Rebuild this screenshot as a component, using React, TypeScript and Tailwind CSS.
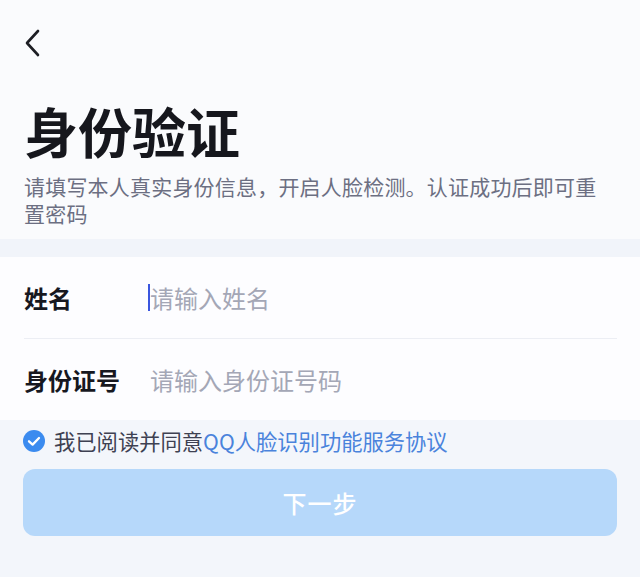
import React from "react";

const font = { fontFamily: '"Noto Sans CJK SC", "Noto Sans", sans-serif' };

const Field = ({ label, placeholder, focused }: { label: string; placeholder: string; focused?: boolean }) => (
  <div className="h-[81px] flex items-center">
    <span className="w-[126px] shrink-0 text-[24px] font-semibold text-[#17181f] leading-none">{label}</span>
    <div className="flex items-center">
      {focused && <span className="w-[2px] h-[27px] bg-[#3a56df] -ml-[2px]"></span>}
      <span className="text-[24px] text-[#a4a7b6] leading-none">{placeholder}</span>
    </div>
  </div>
);

export default function App() {
  return (
    <div className="w-[640px] h-[577px] overflow-hidden bg-[#f3f6fb]" style={font}>
      {/* top area */}
      <div className="bg-[#fafbfd]">
        <header className="h-[86px] flex items-center px-[22px]">
          <svg width="22" height="30" viewBox="0 0 22 30" fill="none">
            <path d="M16 3 L5 15 L16 27" stroke="#1d1e24" strokeWidth="2.6" strokeLinecap="round" strokeLinejoin="round" />
          </svg>
        </header>
        <div className="px-[24px] pt-[18px] pb-[12px]">
          <h1 className="text-[54px] leading-[54px] font-bold text-[#16171d]">身份验证</h1>
          <p className="mt-[15px] text-[21px] leading-[27px] text-[#6c6f82] tracking-[0.2px]">
            请填写本人真实身份信息，开启人脸检测。认证成功后即可重置密码
          </p>
        </div>
      </div>

      <div className="h-[18px] bg-[#f1f4fa]"></div>

      {/* form card */}
      <div className="bg-[#fdfdff] pl-[24px] pr-[23px]">
        <Field label="姓名" placeholder="请输入姓名" focused />
        <div className="h-px bg-[#eceef4]"></div>
        <Field label="身份证号" placeholder="请输入身份证号码" />
      </div>

      {/* agreement + button */}
      <div className="px-[23px] pt-[10px]">
        <div className="flex items-center h-[22px] gap-[9px]">
          <svg width="22" height="22" viewBox="0 0 22 22">
            <circle cx="11" cy="11" r="11" fill="#3b8bef" />
            <path d="M6 11.3 L9.6 14.6 L16 8" stroke="#fff" strokeWidth="2.3" fill="none" strokeLinecap="round" strokeLinejoin="round" />
          </svg>
          <span className="text-[21.3px] leading-none text-[#3e4152]">
            我已阅读并同意<span className="text-[#4a83dc]">QQ人脸识别功能服务协议</span>
          </span>
        </div>
        <button className="mt-[17px] w-full h-[67px] rounded-[12px] bg-[#b6d8fa] text-white text-[24px] font-medium tracking-[1px] flex items-center justify-center">
          下一步
        </button>
      </div>
    </div>
  );
}
